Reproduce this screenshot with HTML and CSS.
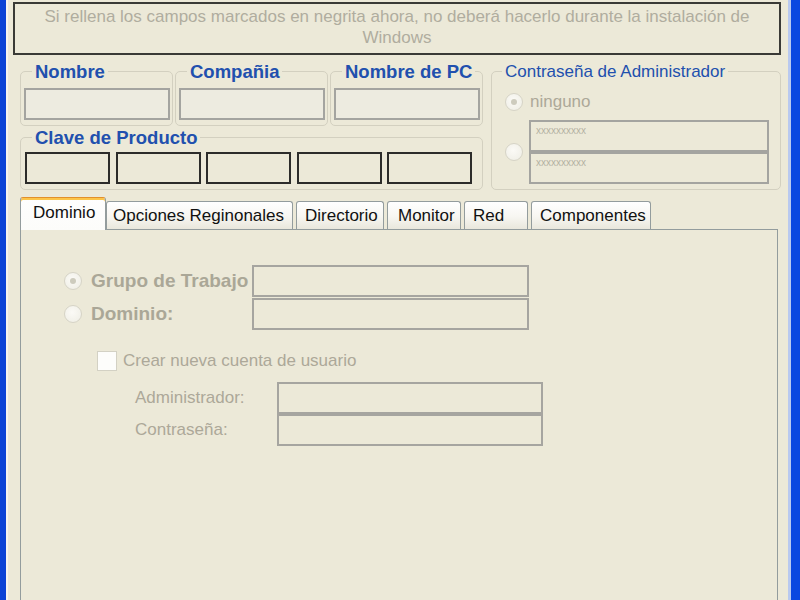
FILE: index.html
```html
<!DOCTYPE html>
<html lang="es">
<head>
<meta charset="utf-8">
<title>Datos de instalación</title>
<link rel="stylesheet" href="styles.css">
</head>
<body>
<div class="window">
  <div class="client">
    <div class="info">Si rellena los campos marcados en negrita ahora, no deberá hacerlo durante la instalación de<br>Windows</div>

    <div class="top">
      <div class="left">
        <div class="row1">
          <div class="group small">
            <span class="legend bold">Nombre</span>
            <div class="field"></div>
          </div>
          <div class="group small">
            <span class="legend bold">Compañia</span>
            <div class="field"></div>
          </div>
          <div class="group small">
            <span class="legend bold">Nombre de PC</span>
            <div class="field"></div>
          </div>
        </div>
        <div class="group key">
          <span class="legend bold">Clave de Producto</span>
          <div class="keys">
            <div class="kbox"></div>
            <div class="kbox"></div>
            <div class="kbox"></div>
            <div class="kbox"></div>
            <div class="kbox"></div>
          </div>
        </div>
      </div>

      <div class="group admin">
        <span class="legend normal">Contraseña de Administrador</span>
        <div class="admin-row">
          <span class="radio on"></span>
          <span class="dis">ninguno</span>
        </div>
        <div class="admin-pw">
          <span class="radio"></span>
          <div class="pw-stack">
            <div class="pw">xxxxxxxxxx</div>
            <div class="pw">xxxxxxxxxx</div>
          </div>
        </div>
      </div>
    </div>

    <div class="tabs">
      <div class="tab active t-dom">Dominio</div>
      <div class="tab t-opc">Opciones Reginonales</div>
      <div class="tab t-dir">Directorio</div>
      <div class="tab t-mon">Monitor</div>
      <div class="tab t-red">Red</div>
      <div class="tab t-comp">Componentes</div>
    </div>

    <div class="panel">
      <div class="wg">
        <span class="radio on"></span>
        <span class="wg-label">Grupo de Trabajo</span>
        <div class="pfield"></div>
        <span class="radio"></span>
        <span class="wg-label">Dominio:</span>
        <div class="pfield"></div>
      </div>
      <div class="check-row">
        <span class="check"></span>
        <span class="dis">Crear nueva cuenta de usuario</span>
      </div>
      <div class="acct">
        <span class="dis">Administrador:</span>
        <div class="pfield"></div>
        <span class="dis">Contraseña:</span>
        <div class="pfield"></div>
      </div>
    </div>
  </div>
</div>
</body>
</html>
```

FILE: styles.css
```css
* { box-sizing: border-box; }
html, body { margin: 0; padding: 0; }
body {
  width: 800px;
  height: 600px;
  overflow: hidden;
  font-family: "Liberation Sans", Arial, sans-serif;
  font-size: 17px;
  background: #0b45d9;
}
.window {
  height: 600px;
  display: flex;
  border-left: 6px solid #0b43d6;
  border-right: 9px solid #0a47e0;
}
.client {
  flex: 1;
  background: #ece9d8;
  border-left: 2px solid #f6f5ef;
  border-right: 3px solid #b9c9ef;
  padding-top: 2px;
  overflow: hidden;
}
.info {
  margin: 0 7px 0 5px;
  height: 53px;
  border: 2px solid #3a3a36;
  padding-top: 2px;
  text-align: center;
  line-height: 21px;
  color: #b0ad9f;
}

.top {
  display: flex;
  gap: 8px;
  margin: 16px 0 0 12px;
}
.left {
  width: 463px;
  display: flex;
  flex-direction: column;
  gap: 11px;
}
.row1 {
  display: flex;
  gap: 2px;
}
.group {
  border: 1px solid #d3d0c0;
  border-radius: 5px;
}
.group.small {
  width: 153px;
  padding: 0 2px 5px 3px;
}
.legend {
  display: block;
  width: fit-content;
  height: 20px;
  line-height: 20px;
  margin: -10px 0 0 8px;
  padding: 0 3px;
  background: #ece9d8;
  white-space: nowrap;
}
.bold {
  font-weight: bold;
  font-size: 18.5px;
  color: #2150ae;
}
.normal {
  color: #2150ae;
}
.field {
  height: 32px;
  margin-top: 6px;
  border: 2px solid #a4a4a0;
  background: #edebe0;
}
.group.key {
  padding: 0 0 5px 4px;
}
.group.key .legend {
  margin-left: 7px;
}
.keys {
  display: flex;
  gap: 5.5px;
  margin-top: 4px;
}
.kbox {
  width: 85px;
  height: 32px;
  border: 2px solid #2c2c2a;
}

.group.admin {
  width: 290px;
  padding: 0 0 5px 13px;
}
.group.admin .legend {
  margin-left: -3px;
}
.admin-row {
  display: flex;
  align-items: center;
  gap: 7px;
  height: 20px;
  margin-top: 10px;
}
.admin-pw {
  display: flex;
  align-items: center;
  gap: 6px;
  margin-top: 8px;
}
.pw-stack {
  width: 240px;
}
.pw {
  height: 32px;
  border: 2px solid #a4a4a0;
  padding: 4px 0 0 5px;
  font-size: 10px;
  line-height: 10px;
  color: #b4b1a3;
}

.dis { color: #aca899; }

.radio {
  display: inline-block;
  flex: none;
  width: 18px;
  height: 18px;
  border-radius: 50%;
  border: 1.5px solid #d6d4c7;
  background: radial-gradient(circle at 45% 40%, #fbfaf6 0%, #eeede4 100%);
  position: relative;
}
.radio.on::after {
  content: "";
  position: absolute;
  left: 4.5px;
  top: 4.5px;
  width: 6px;
  height: 6px;
  border-radius: 50%;
  background: #cdcbbd;
}

.tabs {
  display: flex;
  align-items: flex-end;
  gap: 3px;
  height: 32px;
  margin: 7px 0 0 12px;
}
.tab {
  height: 28px;
  border: 1px solid #939c9d;
  border-bottom: none;
  border-radius: 3px 3px 0 0;
  background: linear-gradient(#ffffff, #f7f6f1 55%, #e9e7dc);
  padding-left: 8px;
  line-height: 27px;
  color: #111;
  white-space: nowrap;
}
.tab.active {
  position: relative;
  z-index: 1;
  height: 33px;
  margin-bottom: -1px;
  margin-right: -3px;
  border-top: 1px solid #e2902c;
  box-shadow: inset 0 2px 0 #fcc54a;
  background: linear-gradient(#fefefe, #fcfcfa);
  padding-top: 2px;
  padding-left: 12px;
  line-height: 26px;
}
.t-dom { width: 86px; }
.t-opc { width: 187px; padding-left: 6px; }
.t-dir { width: 88px; }
.t-mon { width: 74px; padding-left: 10px; }
.t-red { width: 64px; }
.t-comp { width: 120px; }

.panel {
  height: 420px;
  margin: 0 10px 0 12px;
  border: 1px solid #939c9d;
  background: #ece9d8;
  padding: 35px 0 0 43px;
}
.wg {
  display: grid;
  grid-template-columns: 18px 170px 277px;
  grid-auto-rows: 32px;
  row-gap: 1px;
  align-items: center;
}
.wg-label {
  padding-left: 9px;
  font-weight: bold;
  font-size: 19px;
  color: #aaa797;
  white-space: nowrap;
}
.pfield {
  height: 32px;
  border: 2px solid #a6a5a0;
}
.check-row {
  display: flex;
  align-items: center;
  gap: 6px;
  height: 20px;
  line-height: 20px;
  margin: 21px 0 0 33px;
}
.check {
  width: 20px;
  height: 20px;
  border: 1.5px solid #d3d1c4;
  background: #fdfdfb;
}
.acct {
  display: grid;
  grid-template-columns: 142px 266px;
  grid-auto-rows: 32px;
  align-items: center;
  margin: 11px 0 0 71px;
}
```
